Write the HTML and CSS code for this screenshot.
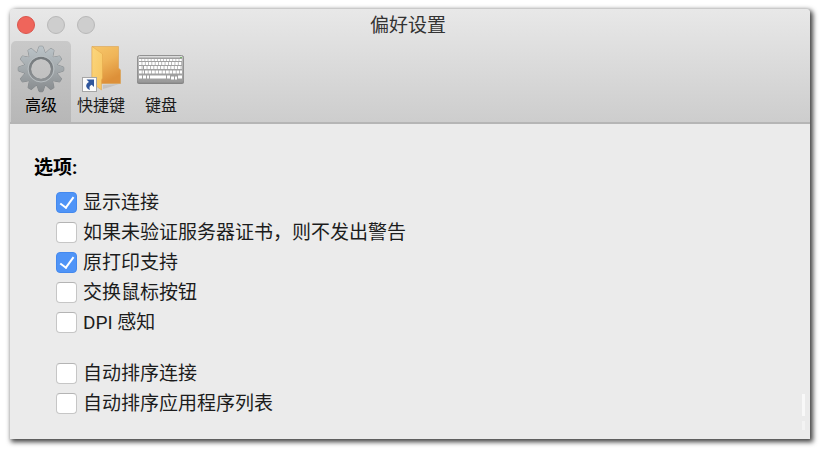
FILE: index.html
```html
<!DOCTYPE html>
<html lang="zh-CN">
<head>
    <meta charset="UTF-8">
    <meta name="viewport" content="width=device-width, initial-scale=1.0">
    <title>偏好设置</title>
    <link rel="stylesheet" href="styles.css">
</head>
<body>
    <div class="window">
        <header class="window-header">
            <div class="titlebar">
                <div class="window-buttons">
                    <button class="dot close" aria-label="关闭"></button>
                    <button class="dot" aria-label="最小化" disabled></button>
                    <button class="dot" aria-label="缩放" disabled></button>
                </div>
                <h1>偏好设置</h1>
            </div>

            <nav class="toolbar">
                <button class="tab active">
                    <svg width="48" height="48" viewBox="0 0 48 48">
                        <defs>
                            <linearGradient id="steel" x1="0" y1="0" x2="0" y2="1">
                                <stop offset="0" stop-color="#bdc6cb"/>
                                <stop offset="0.5" stop-color="#a3a9ac"/>
                                <stop offset="1" stop-color="#85898c"/>
                            </linearGradient>
                            <linearGradient id="ring" x1="0" y1="0" x2="0" y2="1">
                                <stop offset="0" stop-color="#74797c"/>
                                <stop offset="1" stop-color="#8d9194"/>
                            </linearGradient>
                            <g id="teeth">
                                <path d="M19.500 9 L21.800 2 Q22 1.200 22.800 1.200 H25.200 Q26 1.200 26.200 2 L28.500 9Z"/>
                                <path d="M19.500 39 L21.800 46 Q22 46.800 22.800 46.800 H25.200 Q26 46.800 26.200 46 L28.500 39Z"/>
                            </g>
                            <g id="gear">
                                <circle cx="24" cy="24" r="17"/>
                                <use href="#teeth"/>
                                <use href="#teeth" transform="rotate(30 24 24)"/>
                                <use href="#teeth" transform="rotate(60 24 24)"/>
                                <use href="#teeth" transform="rotate(90 24 24)"/>
                                <use href="#teeth" transform="rotate(120 24 24)"/>
                                <use href="#teeth" transform="rotate(150 24 24)"/>
                            </g>
                            <mask id="outline">
                                <use href="#gear" fill="#fff" stroke="#fff" stroke-width="0.6"/>
                                <circle cx="24" cy="24" r="10" fill="#000"/>
                            </mask>
                            <mask id="face">
                                <use href="#gear" fill="#fff"/>
                                <circle cx="24" cy="24" r="10" fill="#000"/>
                            </mask>
                        </defs>
                        <rect width="48" height="48" fill="#777c7f" mask="url(#outline)"/>
                        <g mask="url(#face)">
                            <rect width="48" height="48" fill="url(#steel)"/>
                            <circle cx="24" cy="24" r="11" fill="none" stroke="url(#ring)" stroke-width="2.500"/>
                            <circle cx="24" cy="24" r="13" fill="none" stroke="#b8bec1" stroke-width="1"/>
                        </g>
                    </svg>
                    <span>高级</span>
                </button>
                <button class="tab">
                    <svg width="48" height="48" viewBox="0 0 48 48">
                        <defs>
                            <linearGradient id="folder-back" x1="0" y1="0" x2="0.4" y2="1">
                                <stop offset="0" stop-color="#f6c669"/>
                                <stop offset="0.5" stop-color="#efb458"/>
                                <stop offset="1" stop-color="#dd9039"/>
                            </linearGradient>
                            <linearGradient id="folder-front" x1="0" y1="0" x2="1" y2="1">
                                <stop offset="0" stop-color="#fbd67d"/>
                                <stop offset="1" stop-color="#f7c560"/>
                            </linearGradient>
                        </defs>
                        <path d="M26 40 L42 39 L33 42 L26 44Z" fill="#b5b0a8" opacity="0.5"/>
                        <path d="M15 1.500 H41.500 V23 L43.500 25 V38.500 H24 L15 34Z" fill="url(#folder-back)" stroke="#d99a42" stroke-width="0.5"/>
                        <path d="M15 1.500 L25.500 9 V33 L24.500 35 V45 L15 38Z" fill="url(#folder-front)" stroke="#e0a549" stroke-width="0.5"/>
                        <rect x="5.500" y="32.500" width="14" height="14" fill="#fcfcfc" stroke="#a6a6a6"/>
                        <path d="M9.500 34.500 H17 V42 L14.700 39.700 C12.300 40.700 12 42.500 13 45 C8 43 8.200 39 12 37Z" fill="#2f569c"/>
                    </svg>
                    <span>快捷键</span>
                </button>
                <button class="tab">
                    <svg width="48" height="48" viewBox="0 0 48 48">
                        <defs>
                            <linearGradient id="board" x1="0" y1="0" x2="0" y2="1">
                                <stop offset="0" stop-color="#c2c2c2"/>
                                <stop offset="1" stop-color="#999"/>
                            </linearGradient>
                        </defs>
                        <rect x="0" y="11" width="47" height="28" rx="2" fill="#858585"/>
                        <rect x="0.500" y="10.500" width="46" height="27" rx="2" fill="url(#board)" stroke="#929292"/>
                        <path d="M2 11.500 H45" stroke="#dcdcdc"/>
                        <rect x="43" y="12" width="2" height="1" fill="#78b56c"/>
                        <rect x="2" y="13" width="43" height="21" fill="#a0a0a0"/>
                        <g stroke="#fff">
                            <path d="M2 15 H45" stroke-width="2" stroke-dasharray="2.500 0.600"/>
                            <path d="M2 18.500 H45" stroke-width="3" stroke-dasharray="2.600 0.700"/>
                            <path d="M2 22.500 H6 M7 22.500 H45" stroke-width="3" stroke-dasharray="2.700 0.700"/>
                            <path d="M2 27 H7 M8 27 H45" stroke-width="3" stroke-dasharray="2.800 0.700"/>
                            <path d="M2 32 H5 M6 32 H9 M10 32 H12 M13 32 H29 M30 32 H33 M34 33 H37 M38 33 H40 M41 32 H45" stroke-width="3"/>
                        </g>
                    </svg>
                    <span>键盘</span>
                </button>
            </nav>
        </header>

        <main class="content">
            <h2>选项:</h2>
            <div class="options">
                <label><input type="checkbox" checked>显示连接</label>
                <label><input type="checkbox">如果未验证服务器证书，则不发出警告</label>
                <label><input type="checkbox" checked>原打印支持</label>
                <label><input type="checkbox">交换鼠标按钮</label>
                <label><input type="checkbox">DPI 感知</label>
            </div>
            <div class="options">
                <label><input type="checkbox">自动排序连接</label>
                <label><input type="checkbox">自动排序应用程序列表</label>
            </div>
        </main>

        <div class="scroll-mark"></div>
    </div>
</body>
</html>
```
FILE: styles.css
```css
*, *::before {
    box-sizing: border-box;
}
body {
    margin: 0;
    padding: 9px 11px 11px 10px;
    background-color: #fff;
    color: #1c1c1c;
    font-family: Roboto, "Noto Sans CJK SC", sans-serif;
}
h1, h2 {
    margin: 0;
}
button {
    border: none;
    padding: 0;
    background: none;
    color: inherit;
    font-family: inherit;
}
.window {
    position: relative;
    background-color: #ebebeb;
    border-radius: 4px 4px 0 0;
    box-shadow: 2px 2px 5px 1px rgba(0, 0, 0, 0.75);
}
.window-header {
    background: linear-gradient(#e8e8e8, #cdcdcd);
    border-bottom: 2px solid #b5b5b5;
    border-radius: 4px 4px 0 0;
}
.titlebar {
    display: grid;
    grid-template-columns: 1fr auto 1fr;
    align-items: center;
    height: 32px;
    padding-right: 4px;
}
.titlebar h1 {
    padding-top: 2px;
    font-size: 19px;
    font-weight: 400;
    line-height: 30px;
    color: #333;
}
.window-buttons {
    display: flex;
    gap: 12px;
    padding-left: 7px;
}
.dot {
    width: 18px;
    height: 18px;
    border: 1px solid #b8b8b8;
    border-radius: 50%;
    background-color: #cecece;
}
.dot.close {
    background-color: #ef655b;
    border-color: #da554c;
}
.toolbar {
    display: flex;
    padding-left: 1px;
}
.tab {
    display: flex;
    flex-direction: column;
    align-items: center;
    width: 60px;
    height: 81px;
    padding-top: 4px;
    font-size: 16px;
    line-height: 26px;
    white-space: nowrap;
}
.tab svg {
    display: block;
}
.tab.active {
    background: linear-gradient(#c9c9c9, #b7b7b7);
    border-radius: 5px 5px 0 0;
    color: #000;
}
.content {
    padding: 29px 24px 20px;
}
.content h2 {
    margin-bottom: 5px;
    font-size: 19px;
    font-weight: 700;
    line-height: 30px;
    color: #000;
}
.options {
    display: flex;
    flex-direction: column;
    align-items: flex-start;
    padding-left: 22px;
}
.options + .options {
    margin-top: 21px;
}
.options label {
    display: flex;
    align-items: center;
    gap: 6px;
    font-size: 19px;
    line-height: 30px;
}
.options input {
    appearance: none;
    flex: none;
    display: grid;
    place-items: center;
    width: 21px;
    height: 21px;
    margin: 0 0 2px;
    border: 1px solid #c6c6c6;
    border-top-color: #b4b4b4;
    border-radius: 4px;
    background-color: #fff;
}
.options input:checked {
    background-color: #4f94f7;
    border-color: #4489ee;
}
.options input:checked::before {
    content: "";
    width: 8px;
    height: 14px;
    border: solid #fff;
    border-width: 0 2px 2px 0;
    transform: translateY(-1px) rotate(36deg);
}
/* faint scroll mark in the corner */
.scroll-mark {
    position: absolute;
    right: 5px;
    bottom: 9px;
    width: 3px;
    height: 36px;
    background: linear-gradient(#f8f8f8 22px, transparent 22px, transparent 27px, #f3f3f3 27px);
}
```
